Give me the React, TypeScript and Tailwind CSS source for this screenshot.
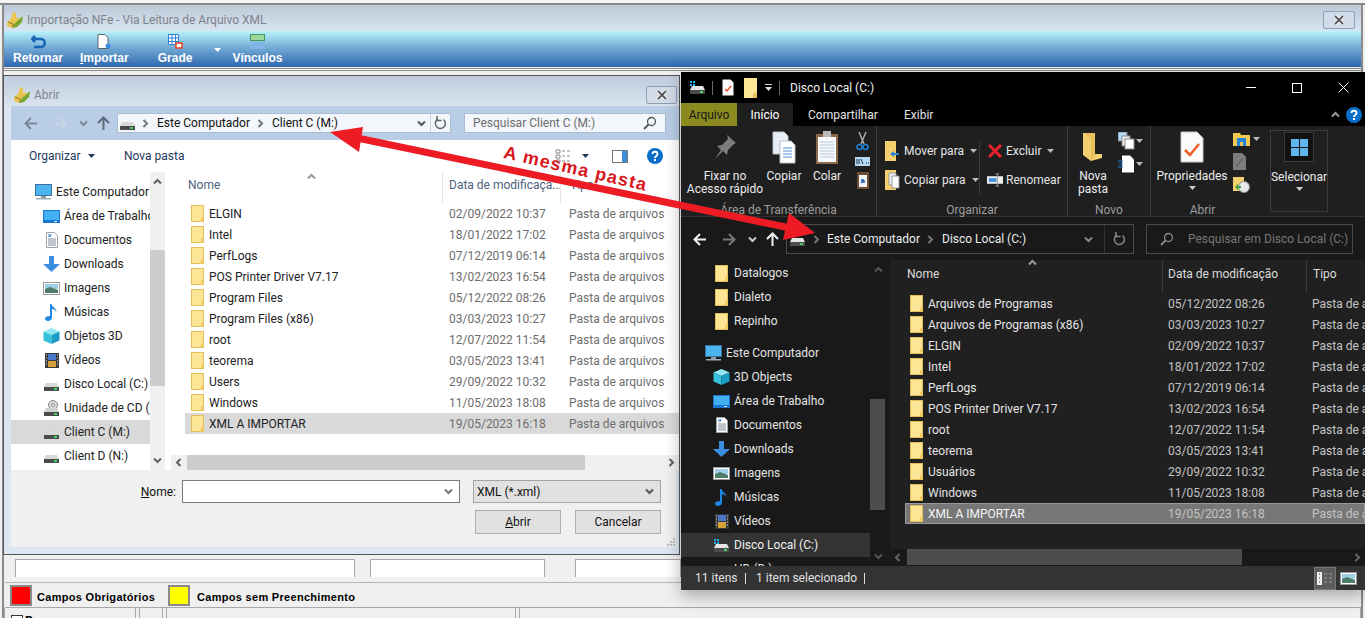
import { ReactNode } from "react";

const ui = "font-['Roboto',sans-serif] text-[12px] leading-none";

const Folder = () => (
  <svg width="15" height="19" viewBox="0 0 15 19" className="shrink-0">
    <rect x="1.5" y="1.500" width="12" height="16" fill="#fde596" stroke="#e5bd5a" />
    <path d="M11 13.500l2.500-1v5H11z" fill="#f3cb63" />
  </svg>
);

const Drive = ({ dark, win }: { dark?: boolean; win?: boolean }) => (
  <svg width="17" height="15" viewBox="0 0 17 15" className="shrink-0">
    {win && <path d="M1 1h2v2H1zM4 1h2v2H4zM1 4h2v2H1zM4 4h2v2H4z" fill="#28b4f0" />}
    <path d="M3 6h11l2 4H1z" fill={dark ? "#e4e4e4" : "#d8d8d8"} />
    <rect x="1" y="10" width="15" height="4" fill="#4b4b4b" />
    <rect x="11" y="11" width="3" height="2" fill="#41d35a" />
  </svg>
);

const Monitor = () => (
  <svg width="17" height="16" viewBox="0 0 17 16" className="shrink-0">
    <rect x="0.5" y="0.5" width="16" height="11" fill="#4cb4ee" stroke="#3a6f9e" />
    <rect x="6" y="12" width="5" height="2" fill="#8d9aa5" />
    <rect x="1" y="14" width="15" height="1.5" fill="#9fb0bd" />
  </svg>
);

const Desktop = () => (
  <svg width="17" height="13" viewBox="0 0 17 13" className="shrink-0">
    <rect width="17" height="13" fill="#1976d2" />
    <rect x="1" y="1" width="15" height="9" fill="#43b0f1" />
    <rect x="11" y="11" width="3" height="1" fill="#d9f0ff" />
  </svg>
);

const Doc = () => (
  <svg width="14" height="16" viewBox="0 0 14 16" className="shrink-0">
    <path d="M1.5 .5h8l3 3v12h-11z" fill="#fff" stroke="#9aa3ab" />
    <path d="M3 7h8M3 9h8M3 11h8M3 13h8" stroke="#7f8c99" />
    <path d="M4 2v3M6 2l-1 3" stroke="#2d7fd0" />
  </svg>
);

const Download = () => (
  <svg width="17" height="16" viewBox="0 0 17 16" className="shrink-0">
    <path d="M6 0h5v8h6l-8.500 8L0 8h6z" fill="#3b8de0" />
  </svg>
);

const Pictures = () => (
  <svg width="17" height="13" viewBox="0 0 17 13" className="shrink-0">
    <rect x=".5" y=".5" width="16" height="12" fill="#fff" stroke="#9a9a9a" />
    <rect x="2" y="2" width="13" height="5" fill="#9fd0e8" />
    <path d="M2 7l5-2 8 3v3H2z" fill="#4d7c68" />
  </svg>
);

const Music = () => (
  <svg width="14" height="17" viewBox="0 0 14 17" className="shrink-0">
    <path d="M5 0h1.500c.5 3 5 4 5 8-1-2-3-3-4.500-3v8.500C7 15.500 5 17 3 17s-3-1-3-2.500S2 12 5 12z" fill="#1e88e5" />
  </svg>
);

const Cube = () => (
  <svg width="17" height="16" viewBox="0 0 17 16" className="shrink-0">
    <path d="M8.500 0l8 3.500-8 3.500-8-3.500z" fill="#8fe8f2" />
    <path d="M.5 3.500l8 3.500v9l-8-3.500z" fill="#36c2dd" />
    <path d="M16.500 3.500l-8 3.500v9l8-3.500z" fill="#1b9cc4" />
  </svg>
);

const Film = () => (
  <svg width="14" height="15" viewBox="0 0 14 15" className="shrink-0">
    <rect width="14" height="15" fill="#3a3a3a" />
    <rect x="3" y="1" width="8" height="6" fill="#4a78c8" />
    <rect x="3" y="8" width="8" height="6" fill="#d4a13b" />
    <path d="M1 2h1M1 5h1M1 8h1M1 11h1M12 2h1M12 5h1M12 8h1M12 11h1" stroke="#ddd" />
  </svg>
);

const Cd = () => (
  <svg width="17" height="17" viewBox="0 0 17 17" className="shrink-0">
    <circle cx="10" cy="5" r="4.500" fill="#d8d8d8" stroke="#8c8c8c" />
    <circle cx="10" cy="5" r="1.500" fill="#fff" stroke="#8c8c8c" />
    <path d="M3 8h11l2 4H1z" fill="#d0d0d0" />
    <rect x="1" y="12" width="15" height="4" fill="#4b4b4b" />
    <rect x="11" y="13" width="3" height="2" fill="#41d35a" />
  </svg>
);

const Chevron = ({ d, c = "#606060" }: { d: string; c?: string }) => (
  <svg width="9" height="9" viewBox="0 0 9 9" className="shrink-0">
    <path d={d} fill="none" stroke={c} strokeWidth="2" />
  </svg>
);
const up = "M1 6.500l3.500-3.500 3.500 3.500";
const down = "M1 2.500l3.500 3.500 3.500-3.500";
const left = "M6.500 1L3 4.500 6.500 8";
const right = "M2.500 1L6 4.500 2.500 8";

const Arrow = ({ dir, c }: { dir: "l" | "r" | "u"; c: string }) => {
  const p = { l: "M8 2L2.500 7.500 8 13M3 7.500h11", r: "M7 2l5.500 5.500L7 13M12 7.500H1", u: "M2 7l5.500-5.500L13 7M7.500 2v12" }[dir];
  return (
    <svg width="15" height="15" viewBox="0 0 15 15" className="shrink-0">
      <path d={p} fill="none" stroke={c} strokeWidth="2" />
    </svg>
  );
};

const Caret = ({ c = "#444" }: { c?: string }) => (
  <svg width="7" height="4" viewBox="0 0 7 4" className="shrink-0">
    <path d="M0 0h7L3.500 4z" fill={c} />
  </svg>
);

const Refresh = ({ c }: { c: string }) => (
  <svg width="13" height="14" viewBox="0 0 13 14" className="shrink-0">
    <path d="M9.500 3.500A5 5 0 1 1 4 3" fill="none" stroke={c} strokeWidth="1.500" />
    <path d="M3 0v4.500h4.500" fill="none" stroke={c} strokeWidth="1.500" />
  </svg>
);

const Search = ({ c }: { c: string }) => (
  <svg width="14" height="14" viewBox="0 0 14 14" className="shrink-0">
    <circle cx="8.500" cy="5.500" r="4" fill="none" stroke={c} strokeWidth="1.300" />
    <path d="M5.500 8.500L1 13" stroke={c} strokeWidth="1.800" />
  </svg>
);

const Help = ({ size = 16 }: { size?: number }) => (
  <svg width={size} height={size} viewBox="0 0 16 16" className="shrink-0">
    <circle cx="8" cy="8" r="8" fill="#0a6fc9" />
    <path d="M5.500 6c0-3 5-3 5 0 0 2-2.500 2-2.500 4" fill="none" stroke="#fff" strokeWidth="1.800" />
    <rect x="7" y="11" width="2" height="2" fill="#fff" />
  </svg>
);

const AppIcon = () => (
  <svg width="18" height="18" viewBox="0 0 18 18" className="shrink-0">
    <path d="M7 1l3 1v5l3-1v4l-3 1v3L6 17l-5-2v-4l4-3z" fill="#e9c550" />
    <path d="M9 12l8-7-1 6-5 5-5 1z" fill="#79a82d" />
    <path d="M2 11l5 2v3" fill="none" stroke="#8d7a2b" />
  </svg>
);

const CloseBox = ({ w }: { w: string }) => (
  <div className={`flex h-[18px] items-center justify-center rounded-[2px] border border-[#8fa0b8] bg-[#d2dce8] ${w}`}>
    <svg width="12" height="10" viewBox="0 0 12 10">
      <path d="M2 1l8 8M10 1L2 9" stroke="#fff" strokeWidth="3.500" />
      <path d="M2 1l8 8M10 1L2 9" stroke="#555" strokeWidth="1.800" />
    </svg>
  </div>
);

type NavItem = { icon: ReactNode; label: string; indent: number; on?: boolean };

const dialogNav: NavItem[] = [
  { icon: <Monitor />, label: "Este Computador", indent: 24 },
  { icon: <Desktop />, label: "Área de Trabalho", indent: 32 },
  { icon: <Doc />, label: "Documentos", indent: 32 },
  { icon: <Download />, label: "Downloads", indent: 32 },
  { icon: <Pictures />, label: "Imagens", indent: 32 },
  { icon: <Music />, label: "Músicas", indent: 32 },
  { icon: <Cube />, label: "Objetos 3D", indent: 32 },
  { icon: <Film />, label: "Vídeos", indent: 32 },
  { icon: <Drive />, label: "Disco Local (C:)", indent: 32 },
  { icon: <Cd />, label: "Unidade de CD (D:)", indent: 32 },
  { icon: <Drive />, label: "Client C (M:)", indent: 32, on: true },
  { icon: <Drive />, label: "Client D (N:)", indent: 32 },
];

const dialogRows = [
  ["ELGIN", "02/09/2022 10:37"],
  ["Intel", "18/01/2022 17:02"],
  ["PerfLogs", "07/12/2019 06:14"],
  ["POS Printer Driver V7.17", "13/02/2023 16:54"],
  ["Program Files", "05/12/2022 08:26"],
  ["Program Files (x86)", "03/03/2023 10:27"],
  ["root", "12/07/2022 11:54"],
  ["teorema", "03/05/2023 13:41"],
  ["Users", "29/09/2022 10:32"],
  ["Windows", "11/05/2023 18:08"],
  ["XML A IMPORTAR", "19/05/2023 16:18"],
];

const explorerNav: NavItem[] = [
  { icon: <Folder />, label: "Datalogos", indent: 32 },
  { icon: <Folder />, label: "Dialeto", indent: 32 },
  { icon: <Folder />, label: "Repinho", indent: 32 },
];

const explorerPc: NavItem[] = [
  { icon: <Monitor />, label: "Este Computador", indent: 24 },
  { icon: <Cube />, label: "3D Objects", indent: 32 },
  { icon: <Desktop />, label: "Área de Trabalho", indent: 32 },
  { icon: <Doc />, label: "Documentos", indent: 32 },
  { icon: <Download />, label: "Downloads", indent: 32 },
  { icon: <Pictures />, label: "Imagens", indent: 32 },
  { icon: <Music />, label: "Músicas", indent: 32 },
  { icon: <Film />, label: "Vídeos", indent: 32 },
  { icon: <Drive dark win />, label: "Disco Local (C:)", indent: 32, on: true },
  { icon: <Drive dark />, label: "HD (D:)", indent: 32 },
];

const explorerRows = [
  ["Arquivos de Programas", "05/12/2022 08:26"],
  ["Arquivos de Programas (x86)", "03/03/2023 10:27"],
  ["ELGIN", "02/09/2022 10:37"],
  ["Intel", "18/01/2022 17:02"],
  ["PerfLogs", "07/12/2019 06:14"],
  ["POS Printer Driver V7.17", "13/02/2023 16:54"],
  ["root", "12/07/2022 11:54"],
  ["teorema", "03/05/2023 13:41"],
  ["Usuários", "29/09/2022 10:32"],
  ["Windows", "11/05/2023 18:08"],
  ["XML A IMPORTAR", "19/05/2023 16:18"],
];

function NavRow({ item, dark }: { item: NavItem; dark?: boolean }) {
  const tone = dark ? (item.on ? "bg-[#333333] text-[#f0f0f0]" : "text-[#e4e4e4]") : item.on ? "bg-[#d9d9d9] text-[#222]" : "text-[#222]";
  return (
    <div className={`flex h-[24px] shrink-0 items-center gap-[4px] overflow-hidden whitespace-nowrap ${tone}`} style={{ paddingLeft: item.indent }}>
      <span className="flex w-[17px] shrink-0 justify-center">{item.icon}</span>
      <span>{item.label}</span>
    </div>
  );
}

function BackWindow() {
  const tool = "flex flex-col items-center gap-[3px] font-['Liberation_Sans',sans-serif] text-[12px] leading-none font-bold text-white";
  return (
    <div className="absolute inset-0 flex flex-col bg-[#f0f0f0]">
      <div className="h-[5px] border-b-2 border-[#8a8a8a] bg-[#f4f4f4]" />
      <div className="mx-[2px] flex flex-1 flex-col border-x-2 border-[#8a8a8a]">
        <div className="flex h-[26px] shrink-0 items-center justify-between bg-linear-to-b from-[#bdc9d8] to-[#d9e4f0] pt-[4px] pr-[6px] pl-[2px]">
          <div className={`${ui} flex items-center gap-[3px] text-[#7d838b]`}>
            <AppIcon />
            <span>Importação NFe - Via Leitura de Arquivo XML</span>
          </div>
          <CloseBox w="w-[32px]" />
        </div>
        <div className="flex h-[36px] shrink-0 items-end bg-linear-to-b from-[#b9f2fc] via-[#6ea6d3] to-[#2f66ae] pb-[3px] pl-[9px]">
          <div className={tool}>
            <svg width="15" height="14" viewBox="0 0 15 14">
              <path d="M4 1L1 4l3 3M1 4h9c5 0 5 8 0 8H3" fill="none" stroke="#1764b4" strokeWidth="2.500" />
            </svg>
            <span>Retornar</span>
          </div>
          <div className={`${tool} ml-[17px]`}>
            <svg width="14" height="15" viewBox="0 0 14 15">
              <path d="M1 .5h7l3 3v11H1z" fill="#fff" stroke="#444" strokeWidth=".8" />
              <circle cx="11" cy="12" r="2.500" fill="#3b8de0" />
            </svg>
            <span><span className="underline">I</span>mportar</span>
          </div>
          <div className={`${tool} ml-[29px]`}>
            <svg width="15" height="15" viewBox="0 0 15 15">
              <path d="M.5.5h10v10H.5zM.5 4h10M.5 7.500h10M4 .5v10M7.500 .5v10" fill="#fff" stroke="#2b7fd4" />
              <rect x="8" y="9" width="6" height="5" fill="#fff" stroke="#e8411e" strokeWidth="1.500" />
            </svg>
            <span>Grade</span>
          </div>
          <div className="mb-[12px] ml-[22px]"><Caret c="#fff" /></div>
          <div className={`${tool} ml-[11px]`}>
            <svg width="15" height="15" viewBox="0 0 15 15">
              <rect x=".5" y=".5" width="14" height="6" fill="#9fd89f" stroke="#3f9a5f" />
              <path d="M.5 8.500h14v6H.5zM7.500 8.500v6" fill="#7fb4e6" stroke="#7fb4e6" />
            </svg>
            <span>Vínculos</span>
          </div>
        </div>
        <div className="mt-[1px] h-[3px] shrink-0 border-y border-[#8a8a8a] bg-white" />
        <div className="flex-1" />
        <div className="ml-[1px] flex h-[25px] shrink-0 items-start gap-[15px] border-b border-[#b4b4b4] pt-[1px] pl-[10px]">
          <div className="h-[18px] w-[340px] border-x border-t border-[#a8a8a8] bg-white" />
          <div className="h-[18px] w-[175px] border-x border-t border-[#a8a8a8] bg-white" />
          <div className="ml-[15px] h-[18px] w-[106px] border-x border-t border-[#a8a8a8] bg-white" />
        </div>
        <div className="ml-[1px] flex h-[25px] shrink-0 items-center border-b border-[#a8a8a8] pt-[1px] pl-[5px] font-['Liberation_Sans',sans-serif] text-[11px] leading-none font-bold tracking-[.3px] text-black">
          <span className="h-[21px] w-[22px] border-[2px] border-[#8a8a8a] bg-[#ff0000]" />
          <span className="mt-[3px] ml-[5px] w-[131px]">Campos Obrigatórios</span>
          <span className="h-[21px] w-[22px] border-[2px] border-[#8a8a8a] bg-[#ffff00]" />
          <span className="mt-[3px] ml-[7px]">Campos sem Preenchimento</span>
        </div>
        <div className={`${ui} flex h-[10px] shrink-0 gap-[3px] overflow-hidden`}>
          <div className="flex w-[132px] gap-[2px] border-x border-[#a8a8a8] pt-[7px] pl-[6px] font-bold">
            <span className="h-[12px] w-[12px] shrink-0 border border-[#333] bg-white" />
            <span>Processar</span>
          </div>
          <div className="w-[24px] border-x border-[#a8a8a8]" />
          <div className="w-[350px] border-x border-[#a8a8a8]" />
          <div className="flex-1 border-x border-[#a8a8a8]" />
        </div>
      </div>
    </div>
  );
}

const Thumb = ({ className }: { className: string }) => <div className={`absolute -z-10 ${className}`} />;

function OpenDialog() {
  return (
    <div className={`${ui} absolute top-[75px] left-[3px] flex h-[480px] w-[677px] flex-col border border-[#555] bg-[#dce7f3] px-[7px] pb-[7px]`}>
      <div className="-mx-[7px] flex h-[30px] shrink-0 items-center justify-between bg-linear-to-b from-[#bfccdb] to-[#d9e4f0] pt-[7px] pr-[2px] pl-[9px]">
        <div className="flex items-center gap-[3px] text-[#80868e]">
          <AppIcon />
          <span>Abrir</span>
        </div>
        <CloseBox w="w-[31px]" />
      </div>
      <div className="-mr-[7px] flex h-[34px] shrink-0 items-center bg-[#b9cee6] pr-[13px] pl-[12px]">
        <Arrow dir="l" c="#7a8794" />
        <span className="ml-[15px]"><Arrow dir="r" c="#c9d6e4" /></span>
        <span className="ml-[11px]"><Chevron d={down} c="#7a8794" /></span>
        <span className="ml-[8px]"><Arrow dir="u" c="#5e6b78" /></span>
        <div className="ml-[6px] flex h-[20px] w-[334px] items-center border border-[#a9bdd5] bg-[#f3f6fa] text-[#111]">
          <span className="ml-[1px]"><Drive /></span>
          <span className="mr-[7px] ml-[5px]"><Chevron d={right} c="#777" /></span>
          <span className="w-[92px] whitespace-nowrap">Este Computador</span>
          <span className="mx-[7px]"><Chevron d={right} c="#777" /></span>
          <span>Client C (M:)</span>
          <span className="mr-[4px] ml-auto"><Chevron d={down} c="#555" /></span>
          <span className="flex h-full w-[20px] items-center justify-center border-l border-[#c6d3e2]"><Refresh c="#666" /></span>
        </div>
        <div className="ml-[13px] flex h-[20px] flex-1 items-center justify-between border border-[#a9bdd5] bg-[#f3f6fa] px-[8px] text-[#6d6d6d]">
          <span>Pesquisar Client C (M:)</span>
          <Search c="#555" />
        </div>
      </div>
      <div className="-mr-[7px] flex h-[32px] shrink-0 items-center bg-white pr-[16px] pl-[18px] text-[#1e395b]">
        <span className="w-[52px]">Organizar</span>
        <span className="ml-[7px]"><Caret c="#1e395b" /></span>
        <span className="ml-[29px]">Nova pasta</span>
        <span className="ml-auto flex items-center gap-[10px]">
          <svg width="17" height="14" viewBox="0 0 17 14">
            <path d="M1 1h4v3H1zM1 6h4v3H1zM1 11h4v2H1zM7 2h3M12 2h3M7 7h3M12 7h3M7 12h3M12 12h3" fill="none" stroke="#8a8a8a" />
          </svg>
          <Caret c="#1e395b" />
          <svg className="ml-[13px]" width="16" height="13" viewBox="0 0 16 13">
            <rect x=".5" y=".5" width="15" height="12" fill="#fff" stroke="#777" />
            <rect x="10" y="1" width="5" height="11" fill="#3f8fd8" />
          </svg>
          <span className="ml-[9px]"><Help /></span>
        </span>
      </div>
      <div className="-mr-[7px] flex h-[298px] shrink-0 bg-white">
        <div className="flex w-[139px] shrink-0 flex-col overflow-hidden pt-[8px]">
          {dialogNav.map((n) => <NavRow key={n.label} item={n} />)}
        </div>
        <div className="relative z-0 flex w-[15px] shrink-0 flex-col items-center justify-between bg-[#f0f0f0] py-[5px]">
          <Thumb className="top-[78px] left-0 h-[136px] w-[15px] bg-[#cdcdcd]" />
          <Chevron d={up} />
          <Chevron d={down} />
        </div>
        <div className="flex min-w-0 flex-1 flex-col pl-[6px]">
          <div className="relative flex h-[31px] items-start text-[#4c607a]">
            <span className="mt-[7px] ml-[17px] w-[254px]">Nome</span>
            <span className="h-full w-[118px] overflow-hidden border-l border-[#e5e5e5] pt-[7px] pl-[6px] whitespace-nowrap">Data de modificaçã...</span>
            <span className="h-full flex-1 border-l border-[#e5e5e5] pt-[7px] pl-[9px]">Tipo</span>
            <span className="absolute top-0 left-[136px]"><Chevron d={up} c="#999" /></span>
          </div>
          <div className="ml-[14px] flex flex-col">
            {dialogRows.map(([name, date], i) => (
              <div key={name} className={`flex h-[21px] items-center ${i === 10 ? "bg-[#d9d9d9]" : ""}`}>
                <span className="ml-[5px]"><Folder /></span>
                <span className="ml-[4px] w-[240px] whitespace-nowrap text-[#222]">{name}</span>
                <span className="w-[120px] text-[#6d6d6d]">{date}</span>
                <span className="whitespace-nowrap text-[#6d6d6d]">Pasta de arquivos</span>
              </div>
            ))}
          </div>
          <div className="relative z-0 mt-[21px] flex h-[15px] items-center justify-between bg-[#f0f0f0] px-[3px]">
            <Thumb className="top-0 left-[16px] h-[15px] w-[398px] bg-[#cdcdcd]" />
            <Chevron d={left} />
            <Chevron d={right} />
          </div>
        </div>
      </div>
      <div className="relative -mr-[4px] flex flex-1 flex-col bg-[#f0f0f0] pt-[10px] pr-[15px]">
        <div className="flex h-[23px] items-center justify-end">
          <span className="mr-[6px] text-[#111]"><span className="underline">N</span>ome:</span>
          <div className="flex h-[23px] w-[278px] items-center justify-end border border-[#7a7a7a] bg-white pr-[6px]"><Chevron d={down} c="#777" /></div>
          <div className="ml-[13px] flex h-[23px] w-[188px] items-center justify-between border border-[#a5a5a5] bg-[#e1e1e1] pr-[6px] pl-[3px] text-[#111]">
            <span>XML (*.xml)</span>
            <Chevron d={down} c="#555" />
          </div>
        </div>
        <div className="mt-[7px] flex items-center justify-end gap-[14px]">
          <div className="flex h-[24px] w-[86px] items-center justify-center border border-[#adadad] bg-[#e1e1e1] text-[#111]"><span><span className="underline">A</span>brir</span></div>
          <div className="flex h-[24px] w-[86px] items-center justify-center border border-[#adadad] bg-[#e1e1e1] text-[#111]">Cancelar</div>
        </div>
        <svg className="absolute right-[1px] bottom-[1px]" width="8" height="8" viewBox="0 0 8 8">
          <path d="M6 0h2v2H6zM3 3h2v2H3zM6 3h2v2H6zM0 6h2v2H0zM3 6h2v2H3zM6 6h2v2H6z" fill="#bdbdbd" />
        </svg>
      </div>
    </div>
  );
}

function RibbonBig({ label, icon, w, caret }: { label: ReactNode; icon: ReactNode; w: number; caret?: boolean }) {
  return (
    <div className="flex shrink-0 flex-col items-center" style={{ width: w }}>
      <div className="flex h-[38px] items-center justify-center">{icon}</div>
      <div className="mt-[4px] text-center leading-[13px] whitespace-nowrap text-[#ececec]">{label}</div>
      {caret && <div className="mt-[3px]"><Caret c="#ccc" /></div>}
    </div>
  );
}

const PageIcon = ({ w = 24, h = 32, children }: { w?: number; h?: number; children?: ReactNode }) => (
  <svg width={w} height={h} viewBox="0 0 24 32">
    <path d="M1 1h16l6 6v24H1z" fill="#fbfbfb" stroke="#c5c5c5" />
    {children}
  </svg>
);

function ExplorerWindow() {
  return (
    <div className={`${ui} absolute top-[72px] left-[681px] flex h-[518px] w-[684px] flex-col overflow-hidden bg-[#191919] text-[#e4e4e4] shadow-[0_6px_16px_rgba(0,0,0,0.3)]`}>
      <div className="flex h-[31px] shrink-0 items-center bg-black pl-[8px]">
        <Drive dark win />
        <span className="ml-[6px] h-[14px] w-px bg-[#666]" />
        <span className="ml-[9px]">
          <svg width="12" height="17" viewBox="0 0 12 17">
            <path d="M.5.5h8l3 3v13H.5z" fill="#fbfbfb" />
            <path d="M3 10l2 2 4-5" fill="none" stroke="#e8532a" strokeWidth="1.500" />
          </svg>
        </span>
        <span className="ml-[10px]">
          <svg width="13" height="20" viewBox="0 0 13 20"><rect width="13" height="20" fill="#fde596" /><path d="M9 16l4-2v6H9z" fill="#e9c15a" /></svg>
        </span>
        <span className="ml-[8px]">
          <svg width="7" height="7" viewBox="0 0 7 7"><path d="M0 0h7v1H0zM0 3h7L3.500 7z" fill="#ddd" /></svg>
        </span>
        <span className="ml-[7px] h-[14px] w-px bg-[#666]" />
        <span className="ml-[10px] text-[#f0f0f0]">Disco Local (C:)</span>
        <div className="ml-auto flex items-center gap-[36px] pr-[16px]">
          <span className="h-px w-[10px] bg-white" />
          <span className="h-[10px] w-[10px] border border-white" />
          <svg width="11" height="11" viewBox="0 0 11 11"><path d="M.5.5l10 10M10.500.5l-10 10" stroke="#fff" /></svg>
        </div>
      </div>
      <div className="flex h-[23px] shrink-0 items-center bg-black">
        <span className="flex h-full w-[56px] items-center justify-center bg-[#8b8a1f] text-[#181818]">Arquivo</span>
        <span className="flex h-full w-[56px] items-center justify-center bg-[#1f1f1f] text-white">Início</span>
        <span className="ml-[15px] w-[67px] whitespace-nowrap">Compartilhar</span>
        <span className="ml-[29px]">Exibir</span>
        <span className="mr-[3px] ml-auto flex items-center gap-[6px]">
          <Chevron d={up} c="#999" />
          <Help />
        </span>
      </div>
      <div className="flex h-[91px] shrink-0 border-b border-[#333] bg-[#1f1f1f]">
        <div className="flex w-[196px] shrink-0 flex-col border-r border-[#3a3a3a]">
          <div className="flex h-[78px] pt-[2px]">
            <RibbonBig
              w={88}
              label={<>Fixar no<br />Acesso rápido</>}
              icon={
                <svg width="24" height="26" viewBox="0 0 24 26">
                  <path d="M14 1l9 8-2 1-6 6-1 5-4-4-8 8 6-9-4-4 5-1 6-6z" fill="#7d7d7d" />
                </svg>
              }
            />
            <RibbonBig
              w={30}
              label="Copiar"
              icon={
                <svg width="24" height="33" viewBox="0 0 24 33">
                  <path d="M1 1h11l4 4v18H1z" fill="#e8eef6" stroke="#b9c2cc" />
                  <path d="M8 10h11l4 4v18H8z" fill="#fff" stroke="#b9c2cc" />
                  <path d="M11 17h9M11 20h9M11 23h9M11 26h9" stroke="#4c8fdc" />
                </svg>
              }
            />
            <RibbonBig
              w={56}
              label="Colar"
              icon={
                <svg width="22" height="33" viewBox="0 0 22 33">
                  <rect x="0" y="3" width="22" height="30" fill="#8a6a4a" />
                  <rect x="2" y="6" width="18" height="25" fill="#f6f8fb" />
                  <path d="M4 11h14M4 14h14M4 17h14M4 20h14M4 23h14M4 26h14" stroke="#b8cbe0" />
                  <rect x="7" y="0" width="8" height="6" fill="#b9b9b9" />
                </svg>
              }
            />
            <div className="flex flex-col items-center gap-[6px] pt-[4px]">
              <svg width="13" height="19" viewBox="0 0 13 19">
                <path d="M3 0l5 12M10 0L5 12" stroke="#aaa" strokeWidth="1.500" />
                <circle cx="3.500" cy="15" r="2.500" fill="none" stroke="#1e7fd8" strokeWidth="1.500" />
                <circle cx="9.500" cy="15" r="2.500" fill="none" stroke="#1e7fd8" strokeWidth="1.500" />
              </svg>
              <svg width="15" height="9" viewBox="0 0 15 9">
                <rect width="15" height="9" fill="#b6d9f5" />
                <path d="M2 2v5M4 2v5M6 2l2 5M11 6h1M13 6h1" stroke="#234" />
              </svg>
              <svg width="12" height="17" viewBox="0 0 12 17">
                <rect width="12" height="17" fill="#6e4f36" />
                <rect x="2" y="3" width="8" height="12" fill="#f4f6f9" />
                <path d="M4 11l3-3M7 8v3M7 8H4" stroke="#1a5fb4" strokeWidth="1.500" />
              </svg>
            </div>
          </div>
          <div className="text-center text-[#9c9c9c]">Área de Transferência</div>
        </div>
        <div className="flex w-[191px] shrink-0 flex-col border-r border-[#3a3a3a]">
          <div className="flex h-[78px] pt-[15px]">
            <div className="flex h-[54px] w-[103px] flex-col gap-[9px] border-r border-[#3a3a3a] pl-[8px] whitespace-nowrap">
              <div className="flex items-center gap-[4px]">
                <svg width="15" height="20" viewBox="0 0 15 20"><path d="M0 0h11v20H0z" fill="#f3cf6d" /><path d="M5 13l4-3v2h5v2H9v2z" fill="#2b7fd4" /></svg>
                <span>Mover para</span>
                <span className="ml-[2px]"><Caret c="#bbb" /></span>
              </div>
              <div className="flex items-center gap-[4px]">
                <svg width="15" height="20" viewBox="0 0 15 20"><path d="M0 0h11v20H0z" fill="#f3cf6d" /><path d="M4 3h7v12H4z" fill="#eef2f7" stroke="#999" /><path d="M7 6h7v12H7z" fill="#fff" stroke="#999" /></svg>
                <span>Copiar para</span>
                <span className="ml-[2px]"><Caret c="#bbb" /></span>
              </div>
            </div>
            <div className="flex flex-col gap-[9px] pl-[7px] whitespace-nowrap">
              <div className="flex h-[20px] items-center gap-[3px]">
                <span className="flex w-[16px] justify-center">
                  <svg width="14" height="14" viewBox="0 0 14 14"><path d="M1 1l12 12M13 1L1 13" stroke="#e8212b" strokeWidth="3" /></svg>
                </span>
                <span>Excluir</span>
                <span className="ml-[3px]"><Caret c="#bbb" /></span>
              </div>
              <div className="flex h-[20px] items-center gap-[3px]">
                <svg width="16" height="14" viewBox="0 0 17 14"><rect x="0" y="3" width="17" height="8" fill="#eee" /><rect x="2" y="5" width="8" height="4" fill="#3e90dc" /><path d="M11 0v14M9 .5h4M9 13.500h4" stroke="#999" /></svg>
                <span>Renomear</span>
              </div>
            </div>
          </div>
          <div className="text-center text-[#9c9c9c]">Organizar</div>
        </div>
        <div className="flex w-[83px] shrink-0 flex-col border-r border-[#3a3a3a]">
          <div className="flex h-[78px] pt-[2px]">
            <RibbonBig
              w={50}
              label={<>Nova<br />pasta</>}
              icon={
                <svg width="20" height="28" viewBox="0 0 20 28">
                  <path d="M0 0h12v21h7v4L8 28 0 22z" fill="#f3cf6d" />
                  <path d="M12 21L8 28V5L0 0h12z" fill="#e3b84f" opacity=".6" />
                </svg>
              }
            />
            <div className="flex flex-col gap-[5px] pt-[4px]">
              <div className="flex items-center gap-[1px]">
                <svg width="17" height="18" viewBox="0 0 17 18"><rect width="9" height="9" fill="#b6d9f5" stroke="#789" /><rect x="4" y="4" width="8" height="10" fill="#eee" stroke="#888" /><rect x="7" y="7" width="9" height="10" fill="#fff" stroke="#888" /></svg>
                <Caret c="#bbb" />
              </div>
              <div className="flex items-center gap-[1px]">
                <svg width="17" height="18" viewBox="0 0 17 18"><path d="M4 .5h8l4 4v13H4z" fill="#fff" /><path d="M0 6h5M1 9h4M0 12h5" stroke="#1e7fd8" /></svg>
                <Caret c="#bbb" />
              </div>
            </div>
          </div>
          <div className="text-center text-[#9c9c9c]">Novo</div>
        </div>
        <div className="flex w-[116px] shrink-0 flex-col">
          <div className="flex h-[78px] pt-[2px]">
            <RibbonBig
              w={82}
              caret
              label="Propriedades"
              icon={
                <PageIcon>
                  <path d="M5 19l5 5 9-11" fill="none" stroke="#ef5a23" strokeWidth="2.500" />
                </PageIcon>
              }
            />
            <div className="flex flex-col gap-[7px] pt-[4px]">
              <div className="flex items-center gap-[3px]">
                <svg width="17" height="14" viewBox="0 0 17 14"><path d="M0 1h7l1 2h9v11H0z" fill="#f4c94f" /><rect x="4" y="6" width="9" height="8" fill="#1f86db" /><rect x="7" y="10" width="3" height="4" fill="#f4c94f" /></svg>
                <Caret c="#bbb" />
              </div>
              <svg width="13" height="17" viewBox="0 0 13 17"><path d="M0 0h9l4 4v13H0z" fill="#7d7d7d" /><path d="M3 14l7-9" stroke="#565656" /></svg>
              <svg width="17" height="16" viewBox="0 0 17 16"><path d="M0 0h11v14H0z" fill="#f3cf6d" /><circle cx="11" cy="10" r="5.500" fill="#e8e8e8" stroke="#888" /><path d="M2 10l3-3v2h3v2H5v2z" fill="#3aa53a" /></svg>
            </div>
          </div>
          <div className="-ml-[13px] text-center text-[#9c9c9c]">Abrir</div>
        </div>
        <div className="my-[4px] ml-[3px] flex w-[58px] shrink-0 flex-col items-center border border-[#3d3d3d] pt-[1px]">
          <div className="flex h-[30px] w-[30px] items-center justify-center border border-[#3a3a3a] bg-[#111]">
            <svg width="17" height="17" viewBox="0 0 17 17">
              <path d="M0 0h8v8H0zM9 0h8v8H9zM0 9h8v8H0zM9 9h8v8H9z" fill="#5fb5ee" />
            </svg>
          </div>
          <div className="mt-[9px] text-[#ececec]">Selecionar</div>
          <div className="mt-[4px]"><Caret c="#ccc" /></div>
        </div>
      </div>
      <div className="flex h-[43px] shrink-0 items-center pt-[1px] pr-[12px] pl-[11px]">
        <Arrow dir="l" c="#f0f0f0" />
        <span className="ml-[15px]"><Arrow dir="r" c="#777" /></span>
        <span className="ml-[11px]"><Chevron d={down} c="#ccc" /></span>
        <span className="ml-[8px]"><Arrow dir="u" c="#f0f0f0" /></span>
        <div className="ml-[6px] flex h-[30px] w-[348px] items-center border border-[#4a4a4a] text-[#ececec]">
          <span className="ml-[2px]"><Drive dark /></span>
          <span className="mr-[5px] ml-[6px]"><Chevron d={right} c="#777" /></span>
          <span className="ml-[1px] w-[92px] whitespace-nowrap">Este Computador</span>
          <span className="mx-[7px]"><Chevron d={right} c="#777" /></span>
          <span>Disco Local (C:)</span>
          <span className="mr-[11px] ml-auto"><Chevron d={down} c="#888" /></span>
          <span className="flex h-full w-[29px] items-center justify-center border-l border-[#333]"><Refresh c="#888" /></span>
        </div>
        <div className="ml-[12px] flex h-[30px] flex-1 items-center border border-[#4a4a4a] pl-[13px] text-[#777]">
          <Search c="#888" />
          <span className="ml-[14px] whitespace-nowrap">Pesquisar em Disco Local (C:)</span>
        </div>
      </div>
      <div className="flex min-h-0 flex-1">
        <div className="flex w-[189px] shrink-0 flex-col overflow-hidden pt-[1px]">
          {explorerNav.map((n) => <NavRow key={n.label} item={n} dark />)}
          <div className="h-[8px] shrink-0" />
          {explorerPc.map((n) => <NavRow key={n.label} item={n} dark />)}
        </div>
        <div className="relative z-0 flex w-[16px] shrink-0 flex-col items-center justify-between py-[5px]">
          <Thumb className="top-[139px] left-0 h-[111px] w-[15px] bg-[#4d4d4d]" />
          <Chevron d={up} c="#555" />
          <Chevron d={down} c="#555" />
        </div>
        <div className="ml-[4px] flex min-w-0 flex-1 flex-col bg-[#202020]">
          <div className="relative flex h-[33px] shrink-0 items-start text-[#dcdcdc]">
            <span className="mt-[8px] ml-[17px] w-[255px]">Nome</span>
            <span className="h-full w-[144px] border-l border-[#3a3a3a] pt-[8px] pl-[5px] whitespace-nowrap">Data de modificação</span>
            <span className="h-full flex-1 border-l border-[#3a3a3a] pt-[8px] pl-[6px]">Tipo</span>
            <span className="absolute -top-[2px] left-[138px]"><Chevron d={up} c="#999" /></span>
          </div>
          <div className="flex flex-col">
            {explorerRows.map(([name, date], i) => (
              <div key={name} className={`ml-[15px] flex h-[21px] items-center overflow-hidden whitespace-nowrap ${i === 10 ? "bg-[#777777] text-[#f4f4f4] outline outline-[#999] -outline-offset-1" : ""}`}>
                <span className="ml-[4px]"><Folder /></span>
                <span className="ml-[4px] w-[240px] shrink-0">{name}</span>
                <span className="w-[144px] shrink-0 text-[#c4c4c4]">{date}</span>
                <span className="text-[#c4c4c4]">Pasta de arquivos</span>
              </div>
            ))}
          </div>
          <div className="relative z-0 mt-auto flex h-[17px] shrink-0 items-center justify-between bg-[#191919] px-[3px]">
            <Thumb className="top-0 left-[17px] h-[16px] w-[335px] bg-[#4d4d4d]" />
            <Chevron d={left} c="#666" />
            <Chevron d={right} c="#666" />
          </div>
        </div>
      </div>
      <div className="flex h-[24px] shrink-0 items-center bg-[#333333] pl-[14px] text-[#e0e0e0]">
        <span className="w-[41px] whitespace-nowrap">11 itens</span>
        <span className="ml-[9px] h-[11px] w-px bg-[#ddd]" />
        <span className="ml-[10px] w-[99px] whitespace-nowrap">1 item selecionado</span>
        <span className="ml-[9px] h-[11px] w-px bg-[#ddd]" />
        <div className="mr-[7px] ml-auto flex items-center gap-[4px]">
          <div className="flex h-[23px] w-[22px] items-center justify-center border border-[#777] bg-[#5c5c5c]">
            <svg width="16" height="13" viewBox="0 0 16 13">
              <rect x="0" y="0" width="5" height="13" fill="#eee" />
              <path d="M2 2h1M2 6h1M2 10h1" stroke="#333" />
              <path d="M7 2h3M12 2h3M7 6h3M12 6h3M7 10h3M12 10h3" stroke="#999" />
            </svg>
          </div>
          <div className="mr-[1px]"><Pictures /></div>
        </div>
      </div>
    </div>
  );
}

export default function App() {
  return (
    <div className="relative h-[618px] w-[1365px] overflow-hidden bg-[#f0f0f0]">
      <BackWindow />
      <OpenDialog />
      <ExplorerWindow />
      <svg className="absolute top-0 left-0" width="1365" height="618" viewBox="0 0 1365 618">
        <path d="M350 136.500L795 229" stroke="#ed1c24" strokeWidth="7" />
        <path d="M330 132l33-5-4 25zM815 233l-26-20-6 27z" fill="#ed1c24" />
      </svg>
      <div className="absolute top-[143px] left-[504px] origin-left rotate-[13deg] font-['Liberation_Sans',sans-serif] text-[18px] leading-none font-bold tracking-[1.2px] whitespace-nowrap text-[#d71920]">
        A mesma pasta
      </div>
    </div>
  );
}
